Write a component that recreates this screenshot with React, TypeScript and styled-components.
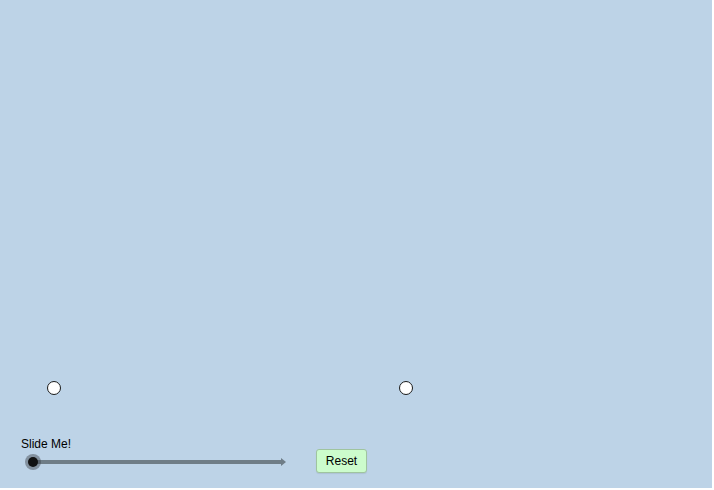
import React from 'react';
import styled, { createGlobalStyle } from 'styled-components';

const GlobalStyle = createGlobalStyle`
  html, body {
    margin: 0;
    padding: 0;
    background: #ffffff;
  }
  body {
    font-family: "Liberation Sans", Arial, sans-serif;
  }
`;

const Applet = styled.div`
  position: relative;
  width: 712px;
  height: 488px;
  background: #bdd3e7;
  overflow: hidden;
  display: flex;
  flex-direction: column;
  justify-content: flex-end;
`;

const Point = styled.div<{ $x: number; $y: number }>`
  position: absolute;
  left: ${p => p.$x - 7}px;
  top: ${p => p.$y - 7}px;
  width: 12px;
  height: 12px;
  border-radius: 50%;
  background: #ffffff;
  border: 1px solid #1a1a1a;
`;

const Controls = styled.div`
  display: flex;
  align-items: flex-end;
  gap: 29px;
  padding: 0 0 18px 21px;
`;

const SliderBox = styled.div`
  display: flex;
  flex-direction: column;
  gap: 3px;
`;

const Label = styled.span`
  font-size: 12px;
  color: #000;
  line-height: 14px;
`;

const Track = styled.div`
  position: relative;
  width: 266px;
  height: 16px;
  display: flex;
  align-items: center;
`;

const Line = styled.div`
  margin-left: 10px;
  width: 250px;
  height: 4px;
  background: #6f7d87;
`;

const Arrow = styled.div`
  width: 0;
  height: 0;
  border-top: 4px solid transparent;
  border-bottom: 4px solid transparent;
  border-left: 5px solid #6f7d87;
`;

const Knob = styled.div`
  position: absolute;
  left: 4px;
  top: 0;
  width: 16px;
  height: 16px;
  border-radius: 50%;
  background: rgba(60, 65, 70, 0.45);
  display: flex;
  align-items: center;
  justify-content: center;

  &::after {
    content: '';
    width: 10px;
    height: 10px;
    border-radius: 50%;
    background: #111;
  }
`;

const ResetButton = styled.button`
  width: 51px;
  height: 24px;
  margin-bottom: -3px;
  padding: 0;
  font-family: "Liberation Sans", Arial, sans-serif;
  font-size: 12px;
  color: #000;
  background: #ccfccc;
  border: 1px solid #9fc49f;
  border-radius: 3px;
  box-shadow: 0 1px 1px rgba(0, 0, 0, 0.08);
`;

const App: React.FC = () => {
  return (
    <>
      <GlobalStyle />
      <Applet>
        <Point $x={54} $y={388} />
        <Point $x={406} $y={388} />
        <Controls>
          <SliderBox>
            <Label>Slide Me!</Label>
            <Track>
              <Line />
              <Arrow />
              <Knob />
            </Track>
          </SliderBox>
          <ResetButton>Reset</ResetButton>
        </Controls>
      </Applet>
    </>
  );
};

export default App;
